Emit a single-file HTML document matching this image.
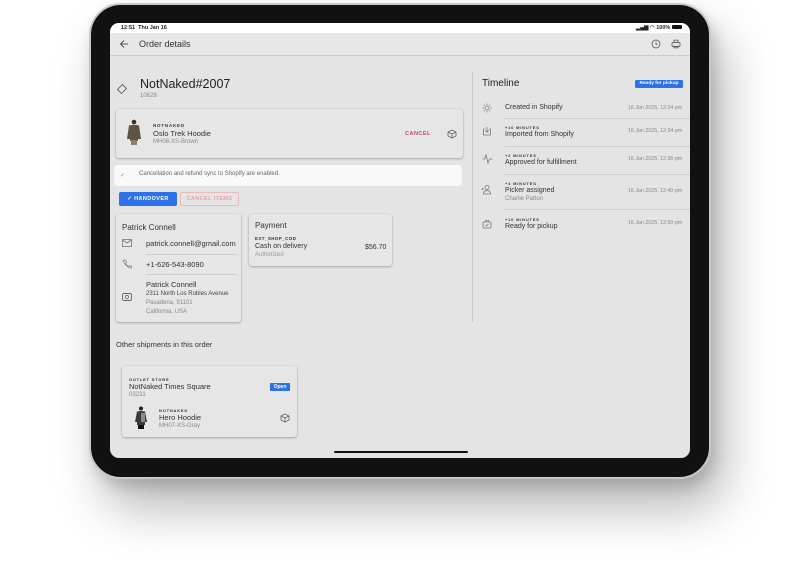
<!DOCTYPE html>
<html><head><meta charset="utf-8"><style>
*{margin:0;padding:0;box-sizing:border-box}
body{width:800px;height:567px;background:#fff;position:relative;overflow:hidden;font-family:"Liberation Sans",sans-serif;color:#333}
.a{position:absolute;white-space:nowrap}
.ipad{position:absolute;left:89px;top:3px;width:622px;height:476px;background:#111;border-radius:32px;border:2px solid #c9c9c9;box-shadow:14px 30px 50px rgba(0,0,0,.28),4px 8px 14px rgba(0,0,0,.15)}
.screen{position:absolute;left:110px;top:23px;width:580px;height:435px;background:#e4e4e4;border-radius:9px;overflow:hidden}
.card{position:absolute;background:#e6e6e6;border-radius:3px;box-shadow:0 1px 2px rgba(0,0,0,.25),0 0 0 .5px rgba(0,0,0,.06)}
.ov{font-size:4.5px;font-weight:bold;letter-spacing:.8px;color:#333}
.t7{font-size:7px;color:#333}
.g{color:#888}
.dv{position:absolute;height:1px;background:#cfcfcf}
svg{position:absolute}
</style></head><body>
<div class="ipad"></div>
<div class="screen">
  <div class="a" style="left:0;top:0;width:580px;height:10px;background:#fff"></div>
  <div class="a" style="left:11px;top:2px;font-size:5.5px;font-weight:bold;color:#222">12:51&nbsp; Thu Jan 16</div>
  <div class="a" style="left:526px;top:2px;font-size:5.5px;font-weight:bold;color:#222">▂▄▆ ◠ 100% <span style="display:inline-block;width:10px;height:4px;background:#111;border-radius:1px"></span></div>
  <div class="a" style="left:0;top:10px;width:580px;height:23px;background:#e7e7e7;border-bottom:1px solid #ccc"></div>
  <svg style="left:9px;top:16px" width="10" height="10" viewBox="0 0 10 10"><path d="M9 5H1.5M5 1.5L1.5 5 5 8.5" stroke="#555" stroke-width="1" fill="none"/></svg>
  <div class="a" style="left:29px;top:16px;font-size:9px;color:#333">Order details</div>
  <svg style="left:541px;top:16px" width="10" height="10" viewBox="0 0 10 10"><circle cx="5" cy="5" r="4" stroke="#666" stroke-width=".9" fill="none"/><path d="M5 2.6V5l1.6 1" stroke="#666" stroke-width=".9" fill="none"/></svg>
  <svg style="left:561px;top:16px" width="10" height="10" viewBox="0 0 10 10"><rect x="1" y="3.5" width="8" height="4" rx="1" stroke="#666" stroke-width=".9" fill="none"/><path d="M3 3.5V1.2h4v2.3M3 6.5v2.3h4V6.5" stroke="#666" stroke-width=".9" fill="none"/></svg>

  <svg style="left:6px;top:60px" width="12" height="12" viewBox="0 0 12 12"><path d="M6.5 1.5L10.5 5.5 5.5 10.5 1.5 6.5Z" stroke="#666" stroke-width=".9" fill="none"/></svg>
  <div class="a" style="left:30px;top:54px;font-size:12.5px;color:#222">NotNaked#2007</div>
  <div class="a" style="left:30px;top:70px;font-size:6px;color:#888">10628</div>

  <div class="card" style="left:6px;top:86px;width:347px;height:49px"></div>
  <svg style="left:15px;top:96px" width="18" height="27" viewBox="0 0 18 27"><circle cx="9" cy="3" r="2.3" fill="#3c3026"/><path d="M4 6.5Q9 5 14 6.5L16 20 13 20 13 22H5V20H2Z" fill="#5e5443"/><rect x="6" y="21" width="6" height="5" fill="#8a7c66"/></svg>
  <div class="a ov" style="left:43px;top:100px">NOTNAKED</div>
  <div class="a t7" style="left:43px;top:106px;font-size:7.5px">Oslo Trek Hoodie</div>
  <div class="a g" style="left:43px;top:116px;font-size:6px">MH08-XS-Brown</div>
  <div class="a" style="left:295px;top:108px;font-size:5.5px;font-weight:bold;letter-spacing:.5px;color:#c9475e">CANCEL</div>
  <svg style="left:337px;top:106px" width="10" height="10" viewBox="0 0 10 10"><path d="M5 1L9 3v4L5 9 1 7V3ZM1 3l4 2 4-2M5 5v4" stroke="#666" stroke-width=".8" fill="none"/></svg>

  <div class="a" style="left:4px;top:142px;width:348px;height:21px;background:#f9f9f9;border-radius:4px"></div>
  <div class="a" style="left:10px;top:149px;font-size:6px;color:#999">✓</div>
  <div class="a" style="left:29px;top:148px;font-size:6px;color:#666">Cancellation and refund sync to Shopify are enabled.</div>

  <div class="a" style="left:9px;top:169px;width:58px;height:14px;background:#2d72e8;border-radius:2px;color:#fff;font-size:5.5px;font-weight:bold;letter-spacing:.4px;text-align:center;line-height:14px">✓ HANDOVER</div>
  <div class="a" style="left:70px;top:169px;width:59px;height:14px;border:1px solid #eab8c0;border-radius:2px;color:#e8a0ae;font-size:5.5px;font-weight:bold;letter-spacing:.4px;text-align:center;line-height:12px">CANCEL ITEMS</div>

  <div class="card" style="left:6px;top:191px;width:125px;height:108px"></div>
  <div class="a" style="left:12px;top:200px;font-size:8px;color:#333">Patrick Connell</div>
  <svg style="left:12px;top:216px" width="10" height="8" viewBox="0 0 10 8"><rect x=".5" y=".5" width="9" height="7" stroke="#777" stroke-width=".8" fill="none"/><path d="M.5 1l4.5 3 4.5-3" stroke="#777" stroke-width=".8" fill="none"/></svg>
  <div class="a t7" style="left:36px;top:216px;font-size:7.5px">patrick.connell@gmail.com</div>
  <div class="dv" style="left:36px;top:231px;width:91px"></div>
  <svg style="left:12px;top:236px" width="10" height="10" viewBox="0 0 10 10"><path d="M2 1l2 .5.5 2-1 1q1 2 3 3l1-1 2 .5.5 2Q5 9 1 2Z" stroke="#777" stroke-width=".7" fill="none"/></svg>
  <div class="a t7" style="left:36px;top:237px;font-size:7.5px">+1-626-543-8090</div>
  <div class="dv" style="left:36px;top:251px;width:91px"></div>
  <svg style="left:12px;top:270px" width="10" height="8" viewBox="0 0 10 8"><rect x=".5" y=".5" width="9" height="7" rx="1.5" stroke="#666" stroke-width=".9" fill="none"/><circle cx="5" cy="4" r="1.7" stroke="#666" stroke-width=".8" fill="none"/></svg>
  <div class="a t7" style="left:36px;top:257px;font-size:7.5px">Patrick Connell</div>
  <div class="a" style="left:36px;top:268px;font-size:6px;color:#444">2311 North Los Robles Avenue</div>
  <div class="a g" style="left:36px;top:277px;font-size:6px">Pasadena, 91101</div>
  <div class="a g" style="left:36px;top:286px;font-size:6px">California, USA</div>

  <div class="card" style="left:139px;top:191px;width:143px;height:52px"></div>
  <div class="a" style="left:145px;top:198px;font-size:8px;color:#333">Payment</div>
  <div class="a ov" style="left:145px;top:213px;letter-spacing:.4px">EXT_SHOP_COD</div>
  <div class="a t7" style="left:145px;top:220px;font-size:7px">Cash on delivery</div>
  <div class="a t7" style="left:255px;top:221px;font-size:7px">$56.70</div>
  <div class="a g" style="left:145px;top:229px;font-size:6px;color:#999">Authorized</div>

  <div class="a" style="left:6px;top:317px;font-size:7.5px;color:#333">Other shipments in this order</div>
  <div class="card" style="left:12px;top:343px;width:175px;height:71px"></div>
  <div class="a ov" style="left:19px;top:354px;font-size:4px">OUTLET STORE</div>
  <div class="a" style="left:19px;top:359px;font-size:7.5px;color:#333">NotNaked Times Square</div>
  <div class="a g" style="left:19px;top:369px;font-size:6px">03231</div>
  <div class="a" style="left:160px;top:360px;width:20px;height:8px;background:#2d72e8;border-radius:1px;color:#fff;font-size:5px;font-weight:bold;text-align:center;line-height:8px">Open</div>
  <svg style="left:24px;top:383px" width="14" height="24" viewBox="0 0 14 24"><circle cx="7" cy="2.5" r="2" fill="#222"/><path d="M3 5.5Q7 4.5 11 5.5L13 16H11V19H3V16H1Z" fill="#3a3a3a"/><rect x="7" y="7" width="4" height="9" fill="#8a8a8a"/><rect x="4" y="19" width="6" height="4" fill="#111"/></svg>
  <div class="a ov" style="left:49px;top:385px;font-size:4px">NOTNAKED</div>
  <div class="a t7" style="left:49px;top:390px;font-size:7.5px">Hero Hoodie</div>
  <div class="a g" style="left:49px;top:400px;font-size:6px">MH07-XS-Gray</div>
  <svg style="left:170px;top:390px" width="10" height="10" viewBox="0 0 10 10"><path d="M5 1L9 3v4L5 9 1 7V3ZM1 3l4 2 4-2M5 5v4" stroke="#666" stroke-width=".8" fill="none"/></svg>

  <div class="a" style="left:362px;top:49px;width:1px;height:250px;background:#c8c8c8"></div>

  <div class="a" style="left:372px;top:55px;font-size:10px;color:#222">Timeline</div>
  <div class="a" style="left:525px;top:57px;width:48px;height:8px;background:#2d72e8;border-radius:1.5px;color:#fff;font-size:4.8px;font-weight:bold;text-align:center;line-height:8px">Ready for pickup</div>

  <svg style="left:372px;top:80px" width="10" height="10" viewBox="0 0 10 10"><circle cx="5" cy="5" r="2" stroke="#777" stroke-width=".7" fill="none"/><path d="M5 .5v1.5M5 8v1.5M.5 5H2M8 5h1.5M1.8 1.8l1 1M7.2 7.2l1 1M1.8 8.2l1-1M7.2 2.8l1-1" stroke="#777" stroke-width=".7"/></svg>
  <div class="a t7" style="left:395px;top:81px;font-size:7px">Created in Shopify</div>
  <div class="a g" style="left:518px;top:82px;font-size:5.3px">16 Jan 2025, 12:24 pm</div>
  <div class="dv" style="left:395px;top:95px;width:185px"></div>

  <svg style="left:372px;top:103px" width="10" height="10" viewBox="0 0 10 10"><path d="M3 3H1.5v6h7V3H7M5 1v5M3.3 4.5L5 6.2 6.7 4.5" stroke="#777" stroke-width=".8" fill="none"/></svg>
  <div class="a ov" style="left:395px;top:102px;font-size:4px">+10 MINUTES</div>
  <div class="a t7" style="left:395px;top:108px;font-size:7px">Imported from Shopify</div>
  <div class="a g" style="left:518px;top:105px;font-size:5.3px">16 Jan 2025, 12:34 pm</div>
  <div class="dv" style="left:395px;top:123px;width:185px"></div>

  <svg style="left:372px;top:131px" width="11" height="10" viewBox="0 0 11 10"><path d="M.5 5h2l1.5-4 2 8 1.5-4h3" stroke="#777" stroke-width=".8" fill="none"/></svg>
  <div class="a ov" style="left:395px;top:130px;font-size:4px">+2 MINUTES</div>
  <div class="a t7" style="left:395px;top:136px;font-size:7px">Approved for fulfillment</div>
  <div class="a g" style="left:518px;top:133px;font-size:5.3px">16 Jan 2025, 12:36 pm</div>
  <div class="dv" style="left:395px;top:151px;width:185px"></div>

  <svg style="left:371px;top:161px" width="11" height="11" viewBox="0 0 11 11"><circle cx="6" cy="3.5" r="2" stroke="#777" stroke-width=".8" fill="none"/><path d="M2.5 10q0-3.5 3.5-3.5T9.5 10ZM.5 5h2M1.5 4v2" stroke="#777" stroke-width=".8" fill="none"/></svg>
  <div class="a ov" style="left:395px;top:158px;font-size:4px">+4 MINUTES</div>
  <div class="a t7" style="left:395px;top:164px;font-size:7px">Picker assigned</div>
  <div class="a g" style="left:395px;top:173px;font-size:6px">Charlie Patton</div>
  <div class="a g" style="left:518px;top:165px;font-size:5.3px">16 Jan 2025, 12:40 pm</div>
  <div class="dv" style="left:395px;top:186px;width:185px"></div>

  <svg style="left:372px;top:196px" width="10" height="10" viewBox="0 0 10 10"><rect x="1" y="3" width="8" height="6" rx="1" stroke="#777" stroke-width=".8" fill="none"/><path d="M3.5 3V1.5h3V3M3.5 6l1 1 2-2" stroke="#777" stroke-width=".8" fill="none"/></svg>
  <div class="a ov" style="left:395px;top:194px;font-size:4px">+10 MINUTES</div>
  <div class="a t7" style="left:395px;top:200px;font-size:7px">Ready for pickup</div>
  <div class="a g" style="left:518px;top:197px;font-size:5.3px">16 Jan 2025, 12:50 pm</div>

  <div class="a" style="left:224px;top:428px;width:134px;height:2px;background:#111;border-radius:1px"></div>
</div>
</body></html>
